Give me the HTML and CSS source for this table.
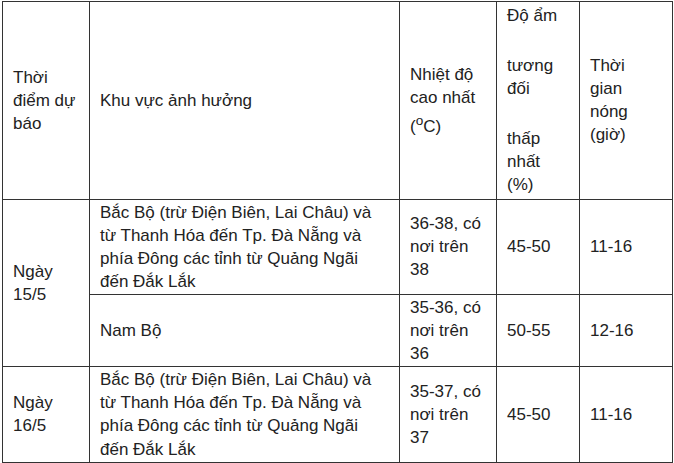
FILE: index.html
```html
<!DOCTYPE html>
<html lang="vi">
<head>
<meta charset="utf-8">
<title>Dự báo nắng nóng</title>
<link rel="stylesheet" href="styles.css">
</head>
<body>
<table class="forecast">
  <colgroup>
    <col class="c-time">
    <col class="c-area">
    <col class="c-temp">
    <col class="c-hum">
    <col class="c-hours">
  </colgroup>
  <tbody>
    <tr class="head">
      <td>Thời điểm dự báo</td>
      <td class="area">Khu vực ảnh hưởng</td>
      <td>Nhiệt độ cao nhất (<sup>o</sup>C)</td>
      <td>
        <p class="hp">Độ ẩm</p>
        <p class="hp gap">tương đối</p>
        <p class="hp gap">thấp nhất (%)</p>
      </td>
      <td class="hours">Thời gian nóng (giờ)</td>
    </tr>
    <tr class="r1">
      <td rowspan="2">Ngày 15/5</td>
      <td class="area">Bắc Bộ (trừ Điện Biên, Lai Châu) và từ Thanh Hóa đến Tp. Đà Nẵng và phía Đông các tỉnh từ Quảng Ngãi đến Đắk Lắk</td>
      <td>36-38, có nơi trên 38</td>
      <td>45-50</td>
      <td class="hours">11-16</td>
    </tr>
    <tr class="r2">
      <td class="area">Nam Bộ</td>
      <td>35-36, có nơi trên 36</td>
      <td>50-55</td>
      <td class="hours">12-16</td>
    </tr>
    <tr class="r3">
      <td>Ngày 16/5</td>
      <td class="area">Bắc Bộ (trừ Điện Biên, Lai Châu) và từ Thanh Hóa đến Tp. Đà Nẵng và phía Đông các tỉnh từ Quảng Ngãi đến Đắk Lắk</td>
      <td>35-37, có nơi trên 37</td>
      <td>45-50</td>
      <td class="hours">11-16</td>
    </tr>
  </tbody>
</table>
</body>
</html>
```

FILE: styles.css
```css
html, body {
  background: #ffffff;
}
body {
  margin: 1px 0 0 2px;
  font-family: "Liberation Sans", Arial, sans-serif;
  font-size: 17px;
  line-height: 23.1px;
  color: #222222;
}
.forecast {
  border-collapse: collapse;
  table-layout: fixed;
  width: 670px;
}
.forecast td {
  border: 1px solid #333333;
  padding: 1px 10px;
  vertical-align: middle;
  text-align: left;
}
.forecast td.area {
  padding-right: 22px;
}
.forecast td.hours {
  padding-right: 16px;
}
.head td {
  padding-top: 2px;
  padding-bottom: 2px;
}
.c-time { width: 87px; }
.c-area { width: 310px; }
.c-temp { width: 97px; }
.c-hum { width: 83px; }
.c-hours { width: 93px; }
.hp {
  margin: 0;
}
.hp.gap {
  margin-top: 27px;
}
sup {
  font-size: 0.8em;
}
```
